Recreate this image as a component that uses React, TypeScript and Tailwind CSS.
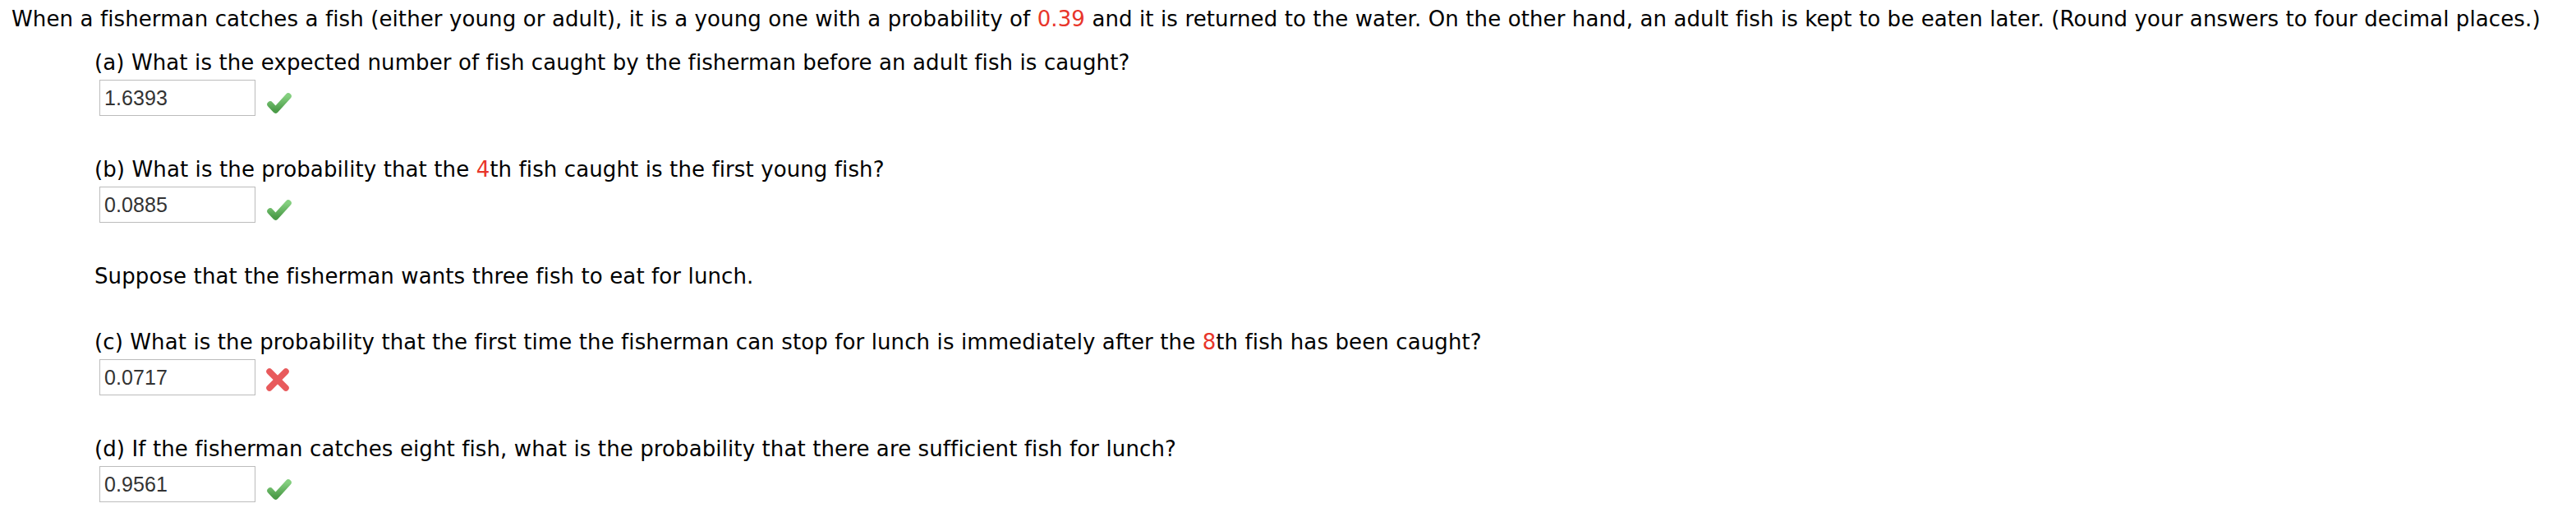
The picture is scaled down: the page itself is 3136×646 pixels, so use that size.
import React from "react"

const red = "text-[#e8352a]"

function Check() {
    return (
        <svg width="32" height="32" viewBox="0 0 32 32" className="ml-[13px] mt-[12px] shrink-0">
            <defs>
                <linearGradient id="g" x1="0" y1="0" x2="0" y2="1">
                    <stop offset="0" stopColor="#84cf7f" />
                    <stop offset="1" stopColor="#4c9c49" />
                </linearGradient>
            </defs>
            <polyline points="5,18 11.5,25 27,8" fill="none" stroke="url(#g)" strokeWidth="7.5" strokeLinecap="round" strokeLinejoin="round" />
        </svg>
    )
}

function Cross() {
    return (
        <svg width="30" height="30" viewBox="0 0 30 30" className="ml-[12px] mt-[10px] shrink-0">
            <g stroke="#e85a5c" strokeWidth="7.5" strokeLinecap="round">
                <line x1="5" y1="5" x2="25" y2="25" />
                <line x1="25" y1="5" x2="5" y2="25" />
            </g>
        </svg>
    )
}

function Answer({ value, ok }: { value: string; ok: boolean }) {
    return (
        <div className="flex items-start mt-[5px] ml-[6px]">
            <div className="w-[190px] h-[44px] border border-[#bcbcbc] bg-white flex items-center pl-[5px] text-[25px] text-[#333] font-['Liberation_Sans',Arial,sans-serif]">
                {value}
            </div>
            {ok ? <Check /> : <Cross />}
        </div>
    )
}

export default function App() {
    return (
        <div className="bg-white min-h-screen text-black font-['DejaVu_Sans',Verdana,sans-serif] text-[26px] leading-[32px] tracking-[0.11px] pt-[7px] pl-[14px]">
            <p className="whitespace-nowrap">
                When a fisherman catches a fish (either young or adult), it is a young one with a probability of <span className={red}>0.39</span> and it is returned to the water. On the other hand, an adult fish is kept to be eaten later. (Round your answers to four decimal places.)
            </p>
            <div className="pl-[101px]">
                <p className="mt-[21px]">(a) What is the expected number of fish caught by the fisherman before an adult fish is caught?</p>
                <Answer value="1.6393" ok />

                <p className="mt-[49px]">(b) What is the probability that the <span className={red}>4</span>th fish caught is the first young fish?</p>
                <Answer value="0.0885" ok />

                <p className="mt-[49px]">Suppose that the fisherman wants three fish to eat for lunch.</p>

                <p className="mt-[48px]">(c) What is the probability that the first time the fisherman can stop for lunch is immediately after the <span className={red}>8</span>th fish has been caught?</p>
                <Answer value="0.0717" ok={false} />

                <p className="mt-[49px]">(d) If the fisherman catches eight fish, what is the probability that there are sufficient fish for lunch?</p>
                <Answer value="0.9561" ok />
            </div>
        </div>
    )
}
